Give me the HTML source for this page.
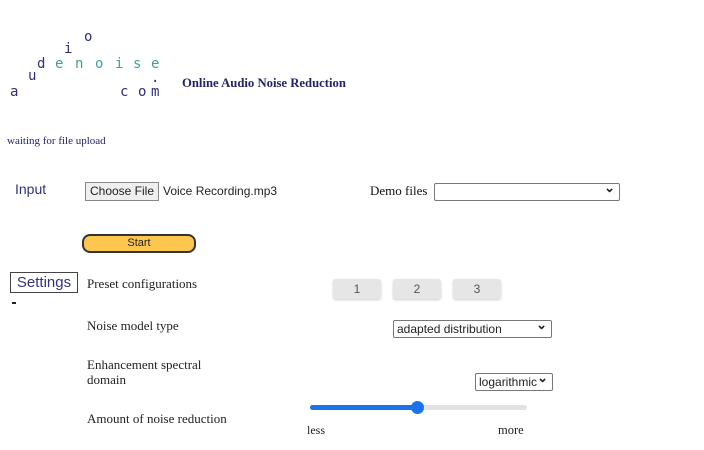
<!DOCTYPE html>
<html><head><style>
body{margin:0;width:704px;height:450px;background:#fff;position:relative;overflow:hidden;font-family:"Liberation Serif",serif}
.a{position:absolute;white-space:nowrap}
.l{position:absolute;font-family:"DejaVu Sans Mono","Liberation Mono",monospace;font-size:14px;line-height:14px}
.n{color:#2e2e7a}.t{color:#3aa597}
.s{font-family:"Liberation Sans",sans-serif}
.btn{position:absolute;background:#e6e6e6;border-radius:3px;font-family:"Liberation Sans",sans-serif;font-size:12px;color:#555;text-align:center;line-height:20px;height:20px;box-shadow:0 1px 2px #ccc}
.sel{position:absolute;border:1px solid #777;border-radius:2px;font-family:"Liberation Sans",sans-serif;font-size:12px;color:#222;height:16px;line-height:16px;padding-left:3px;box-sizing:content-box}
.sel:after{content:"⌄";position:absolute;right:4px;top:-4px;font-size:13px;font-weight:bold}
</style></head><body>
<span class="l n" style="left:10px;top:85px">a</span>
<span class="l n" style="left:28px;top:69px">u</span>
<span class="l n" style="left:37px;top:57px">d</span>
<span class="l t" style="left:55px;top:57px">e</span>
<span class="l t" style="left:75px;top:57px">n</span>
<span class="l t" style="left:95px;top:57px">o</span>
<span class="l t" style="left:115px;top:57px">i</span>
<span class="l t" style="left:133px;top:57px">s</span>
<span class="l t" style="left:151px;top:57px">e</span>
<span class="l n" style="left:64px;top:42px">i</span>
<span class="l n" style="left:84px;top:30px">o</span>
<span class="l n" style="left:151px;top:71px">.</span>
<span class="l n" style="left:120px;top:85px">c</span>
<span class="l n" style="left:138px;top:85px">o</span>
<span class="l n" style="left:151px;top:85px">m</span>
<div class="a" style="left:182px;top:76px;font-size:12.7px;font-weight:bold;color:#23236b">Online Audio Noise Reduction</div>
<div class="a" style="left:7px;top:135px;font-size:11px;color:#23236b">waiting for file upload</div>
<div class="a s" style="left:15px;top:181px;font-size:14px;color:#33337f">Input</div>
<div class="a s" style="left:85px;top:182px;width:72px;height:17px;border:1px solid #888;background:#efefef;font-size:12px;line-height:17px;text-align:center;color:#222">Choose File</div>
<div class="a s" style="left:163px;top:184px;font-size:12px;color:#222">Voice Recording.mp3</div>
<div class="a" style="left:370px;top:183px;font-size:13px;color:#111">Demo files</div>
<div class="sel" style="left:434px;top:183px;width:181px"></div>
<div class="a s" style="left:82px;top:234px;width:110px;height:15px;border:2px solid #333;border-radius:8px;background:#fcc64f;font-size:11px;line-height:15px;text-align:center;color:#222">Start</div>
<div class="a s" style="left:10px;top:272px;width:66px;height:19px;border:1.5px solid #444;font-size:15px;line-height:19px;text-align:center;color:#33337f">Settings</div>
<div class="a" style="left:12px;top:302px;width:4px;height:2px;background:#222"></div>
<div class="a" style="left:87px;top:276px;font-size:13px;color:#222">Preset configurations</div>
<div class="btn" style="left:333px;top:279px;width:48px">1</div>
<div class="btn" style="left:393px;top:279px;width:48px">2</div>
<div class="btn" style="left:453px;top:279px;width:48px">3</div>
<div class="a" style="left:87px;top:318px;font-size:13px;color:#222">Noise model type</div>
<div class="sel" style="left:393px;top:320px;width:154px">adapted distribution</div>
<div class="a" style="left:87px;top:357px;font-size:13px;line-height:15px;color:#222">Enhancement spectral<br>domain</div>
<div class="sel" style="left:475px;top:373px;width:73px">logarithmic</div>
<div class="a" style="left:87px;top:411px;font-size:13px;color:#222">Amount of noise reduction</div>
<div class="a" style="left:310px;top:405px;width:217px;height:5px;background:#e2e2e2;border-radius:3px"></div>
<div class="a" style="left:310px;top:405px;width:108px;height:5px;background:#1a73e8;border-radius:3px"></div>
<div class="a" style="left:411px;top:401px;width:13px;height:13px;background:#1a73e8;border-radius:50%"></div>
<div class="a" style="left:307px;top:423px;font-size:12px;color:#222">less</div>
<div class="a" style="left:498px;top:423px;font-size:12.5px;color:#222">more</div>
</body></html>
